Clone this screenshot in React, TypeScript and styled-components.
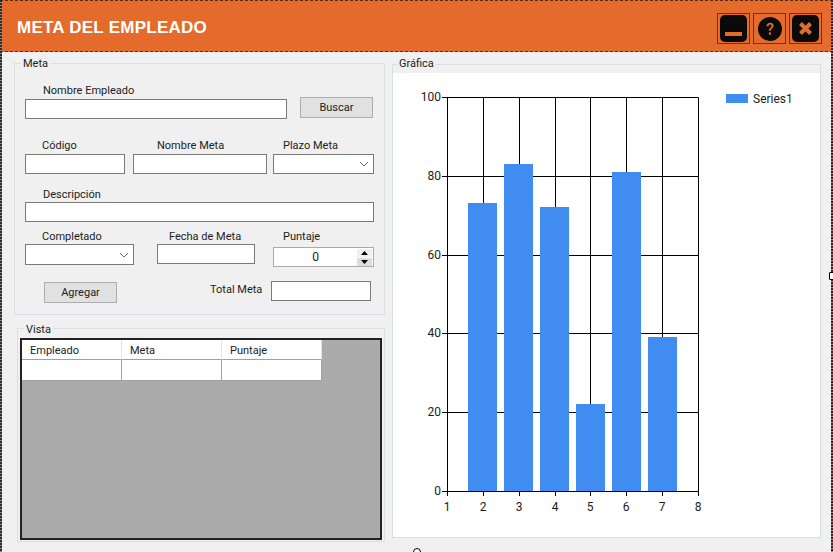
import React from 'react';
import styled, { createGlobalStyle } from 'styled-components';

const GlobalStyle = createGlobalStyle`
  html, body {
    margin: 0;
    padding: 0;
    background: #f0f0f0;
  }
  * {
    box-sizing: border-box;
  }
`;

const Window = styled.div`
  position: relative;
  width: 833px;
  height: 552px;
  overflow: hidden;
  display: flex;
  flex-direction: column;
  background: #f0f0f0;
  color: #1c1c1c;
  font-family: Roboto, 'Liberation Sans', sans-serif;
  font-size: 11px;
  line-height: 14px;
`;

const EdgeStrip = styled.div<{ $side: 'left' | 'right' }>`
  position: absolute;
  top: 0;
  bottom: 0;
  ${(p) => p.$side}: 0;
  width: 2px;
  background: repeating-linear-gradient(to bottom, #2b2b2b 0 2px, #8a8a8a 2px 3px);
`;

const Handle = styled.div<{ $right?: boolean }>`
  position: absolute;
  width: 8px;
  height: 8px;
  background: #fff;
  border: 1px solid #000;
  ${(p) =>
    p.$right
      ? 'right: -4px; top: 272px; border-radius: 1px;'
      : 'left: 413px; top: 548px; border-radius: 50%;'}
`;

const TitleBar = styled.header`
  flex: none;
  height: 52px;
  display: flex;
  align-items: flex-start;
  justify-content: space-between;
  padding: 13px 11px 0 17px;
  background: #e56b2d;
  border-top: 1px dashed #5a2a12;
  border-bottom: 1px dashed #5a2a12;
`;

const Title = styled.h1`
  margin: 2px 0 0;
  color: #fff;
  font-family: 'Liberation Sans', Arial, sans-serif;
  font-size: 17px;
  line-height: 24px;
  font-weight: 700;
  letter-spacing: 0.25px;
`;

const WindowButtons = styled.div`
  display: flex;
  gap: 3px;
  margin-top: -1px;
`;

const WindowButton = styled.button`
  width: 33px;
  height: 31px;
  padding: 0;
  display: flex;
  align-items: center;
  justify-content: center;
  background: #e56b2d;
  border: 1px solid #7c2d0d;
`;

const Body = styled.main`
  flex: 1;
  display: flex;
  align-items: flex-start;
  gap: 7px;
  padding: 11px 0 0 14px;
`;

const LeftColumn = styled.div`
  width: 371px;
  display: flex;
  flex-direction: column;
  gap: 13px;
`;

const Group = styled.section`
  position: relative;
  border: 1px solid #d9e0e4;
`;

const GroupTitle = styled.span<{ $top: number; $left: number }>`
  position: absolute;
  top: ${(p) => p.$top}px;
  left: ${(p) => p.$left}px;
  padding: 0 2px;
  background: #f0f0f0;
`;

const MetaGroup = styled(Group)`
  height: 252px;
  padding: 19px 0 0 10px;
`;

const VistaGroup = styled(Group)`
  height: 214px;
  margin-left: 3px;
  padding: 9px 2px 1px;
`;

const ChartGroup = styled(Group)`
  width: 429px;
  height: 474px;
  margin-top: 1px;
  padding-top: 8px;
`;

const Row = styled.div<{ $top?: number }>`
  display: flex;
  align-items: flex-start;
  margin-top: ${(p) => p.$top ?? 0}px;
`;

const Field = styled.div<{ $width: number; $left?: number }>`
  flex: none;
  width: ${(p) => p.$width}px;
  margin-left: ${(p) => p.$left ?? 0}px;
`;

const FieldLabel = styled.label<{ $indent: number; $low?: boolean }>`
  display: block;
  padding-top: ${(p) => (p.$low ? 2 : 1)}px;
  margin-bottom: ${(p) => (p.$low ? 0 : 1)}px;
  padding-left: ${(p) => p.$indent}px;
  white-space: nowrap;
`;

const TextBox = styled.div<{ $drop?: number }>`
  height: 20px;
  margin-top: ${(p) => p.$drop ?? 0}px;
  background: #fff;
  border: 1px solid #7a7a7a;
`;

const ComboBox = styled(TextBox)<{ $height?: number }>`
  height: ${(p) => p.$height ?? 20}px;
  display: flex;
  align-items: center;
  justify-content: flex-end;
  padding-right: 3px;
`;

const SpinBox = styled.div`
  height: 20px;
  margin-top: 3px;
  display: flex;
  align-items: center;
  background: #fff;
  border: 1px solid #ababab;
`;

const SpinValue = styled.span`
  flex: 1;
  text-align: center;
  font-size: 12px;
`;

const Spinner = styled.div`
  width: 15px;
  margin-right: 1px;
  display: flex;
  flex-direction: column;
  gap: 1px;
`;

const SpinStep = styled.div<{ $down?: boolean }>`
  height: 8px;
  display: flex;
  align-items: center;
  justify-content: center;
  background: ${(p) => (p.$down ? '#dcdcdc' : '#f0f0f0')};
`;

const PushButton = styled.button<{ $left: number; $drop: number }>`
  flex: none;
  width: 73px;
  height: 21px;
  margin-left: ${(p) => p.$left}px;
  margin-top: ${(p) => p.$drop}px;
  padding: 0;
  background: #e1e1e1;
  border: 1px solid #adadad;
  color: #1c1c1c;
  font: inherit;
`;

const TotalLabel = styled.span`
  flex: none;
  width: 61px;
  margin-left: 93px;
  padding-top: 2px;
`;

const TotalBox = styled(TextBox)`
  flex: none;
  width: 100px;
`;

const DataGrid = styled.div`
  height: 202px;
  background: #ababab;
  border: 2px solid #222;
`;

const GridTable = styled.div`
  width: 300px;
  display: grid;
  grid-template-columns: repeat(3, 100px);
  grid-template-rows: 20px 21px;
`;

const GridCell = styled.div<{ $header?: boolean }>`
  padding: 4px 0 0 8px;
  background: #fff;
  border-right: 1px solid ${(p) => (p.$header ? '#e4e4e4' : '#a0a0a0')};
  border-bottom: 1px solid #a0a0a0;
`;

const ChartArea = styled.div`
  height: 464px;
  width: 427px;
  background: #fff;
`;

const ChartSvg = styled.svg`
  display: block;
  font-family: Roboto, 'Liberation Sans', sans-serif;
  font-size: 12px;
  fill: #1c1c1c;
`;

const chevron = (
  <svg width="12" height="8" viewBox="0 0 12 8">
    <path d="M2 2l4 4 4-4" fill="none" stroke="#666" strokeWidth="1" />
  </svg>
);

const ORANGE = '#e56b2d';
const BAR = '#418cf0';

const X_LEFT = 447;
const X_RIGHT = 698;
const Y_TOP = 97;
const Y_BOTTOM = 491;
const xAt = (v: number) => Math.round(X_LEFT + ((v - 1) * (X_RIGHT - X_LEFT)) / 7);
const yAt = (v: number) => Math.round(Y_BOTTOM - (v * (Y_BOTTOM - Y_TOP)) / 100);

const series = [
  { x: 2, y: 73 },
  { x: 3, y: 83 },
  { x: 4, y: 72 },
  { x: 5, y: 22 },
  { x: 6, y: 81 },
  { x: 7, y: 39 },
];

const Chart: React.FC = () => (
  <ChartSvg width="427" height="464" viewBox="393 73 427 464">
    {[1, 2, 3, 4, 5, 6, 7, 8].map((v) => (
      <g key={v}>
        <line x1={xAt(v) + 0.5} x2={xAt(v) + 0.5} y1={Y_TOP + 0.5} y2={Y_BOTTOM + 5} stroke="#000" />
        <text x={xAt(v)} y={511} textAnchor="middle">{v}</text>
      </g>
    ))}
    {[0, 20, 40, 60, 80, 100].map((v) => (
      <g key={v}>
        <line x1={X_LEFT - 5} x2={X_RIGHT + 0.5} y1={yAt(v) + 0.5} y2={yAt(v) + 0.5} stroke="#000" />
        <text x={441} y={yAt(v) + 4} textAnchor="end">{v}</text>
      </g>
    ))}
    {series.map((d) => (
      <rect
        key={d.x}
        x={468 + (d.x - 2) * 36}
        y={yAt(d.y)}
        width={29}
        height={Y_BOTTOM - yAt(d.y)}
        fill={BAR}
      />
    ))}
    <rect x={726} y={94} width={22} height={9} fill={BAR} />
    <text x={753} y={103}>Series1</text>
  </ChartSvg>
);

export default function App() {
  return (
    <Window>
      <GlobalStyle />
      <TitleBar>
        <Title>META DEL EMPLEADO</Title>
        <WindowButtons>
          <WindowButton aria-label="Minimizar">
            <svg width="27" height="27" viewBox="0 0 27 27">
              <rect width="27" height="27" rx="5" fill="#0a0a0a" />
              <rect x="5" y="17" width="17" height="4" fill={ORANGE} />
            </svg>
          </WindowButton>
          <WindowButton aria-label="Ayuda">
            <svg width="24" height="24" viewBox="0 0 24 24">
              <circle cx="12" cy="12" r="12" fill="#0a0a0a" />
              <path
                d="M8.5 9.2c0-2.2 1.5-3.4 3.6-3.4s3.5 1.2 3.5 3c0 2.6-2.7 2.6-2.7 5h-2c0-3.2 2.6-3.2 2.6-4.9 0-.8-.5-1.3-1.4-1.3s-1.5.6-1.6 1.6z"
                fill={ORANGE}
              />
              <rect x="10.9" y="15.4" width="2" height="2.4" fill={ORANGE} />
            </svg>
          </WindowButton>
          <WindowButton aria-label="Cerrar">
            <svg width="27" height="27" viewBox="0 0 27 27">
              <rect width="27" height="27" rx="5" fill="#0a0a0a" />
              <path d="M8.5 8.5l10 10M18.5 8.5l-10 10" stroke={ORANGE} strokeWidth="4" fill="none" />
            </svg>
          </WindowButton>
        </WindowButtons>
      </TitleBar>

      <Body>
        <LeftColumn>
          <MetaGroup>
            <GroupTitle $top={-7} $left={6}>Meta</GroupTitle>
            <Row>
              <Field $width={262}>
                <FieldLabel $indent={18}>Nombre Empleado</FieldLabel>
                <TextBox />
              </Field>
              <PushButton $left={13} $drop={14}>Buscar</PushButton>
            </Row>
            <Row $top={19}>
              <Field $width={100}>
                <FieldLabel $indent={17}>Código</FieldLabel>
                <TextBox />
              </Field>
              <Field $width={134} $left={8}>
                <FieldLabel $indent={24}>Nombre Meta</FieldLabel>
                <TextBox />
              </Field>
              <Field $width={101} $left={6}>
                <FieldLabel $indent={10}>Plazo Meta</FieldLabel>
                <ComboBox $drop={1}>{chevron}</ComboBox>
              </Field>
            </Row>
            <Row $top={12}>
              <Field $width={349}>
                <FieldLabel $indent={18} $low>Descripción</FieldLabel>
                <TextBox />
              </Field>
            </Row>
            <Row $top={6}>
              <Field $width={109}>
                <FieldLabel $indent={17} $low>Completado</FieldLabel>
                <ComboBox $height={21}>{chevron}</ComboBox>
              </Field>
              <Field $width={98} $left={23}>
                <FieldLabel $indent={12} $low>Fecha de Meta</FieldLabel>
                <TextBox />
              </Field>
              <Field $width={101} $left={18}>
                <FieldLabel $indent={10} $low>Puntaje</FieldLabel>
                <SpinBox>
                  <SpinValue>0</SpinValue>
                  <Spinner>
                    <SpinStep>
                      <svg width="7" height="4" viewBox="0 0 7 4"><path d="M3.5 0L7 4H0z" fill="#000" /></svg>
                    </SpinStep>
                    <SpinStep $down>
                      <svg width="7" height="4" viewBox="0 0 7 4"><path d="M0 0h7L3.5 4z" fill="#000" /></svg>
                    </SpinStep>
                  </Spinner>
                </SpinBox>
              </Field>
            </Row>
            <Row $top={14}>
              <PushButton $left={19} $drop={1}>Agregar</PushButton>
              <TotalLabel>Total Meta</TotalLabel>
              <TotalBox />
            </Row>
          </MetaGroup>

          <VistaGroup>
            <GroupTitle $top={-6} $left={6}>Vista</GroupTitle>
            <DataGrid>
              <GridTable>
                <GridCell $header>Empleado</GridCell>
                <GridCell $header>Meta</GridCell>
                <GridCell $header>Puntaje</GridCell>
                <GridCell />
                <GridCell />
                <GridCell />
              </GridTable>
            </DataGrid>
          </VistaGroup>
        </LeftColumn>

        <ChartGroup>
          <GroupTitle $top={-8} $left={4}>Gráfica</GroupTitle>
          <ChartArea>
            <Chart />
          </ChartArea>
        </ChartGroup>
      </Body>

      <EdgeStrip $side="left" />
      <EdgeStrip $side="right" />
      <Handle $right />
      <Handle />
    </Window>
  );
}
